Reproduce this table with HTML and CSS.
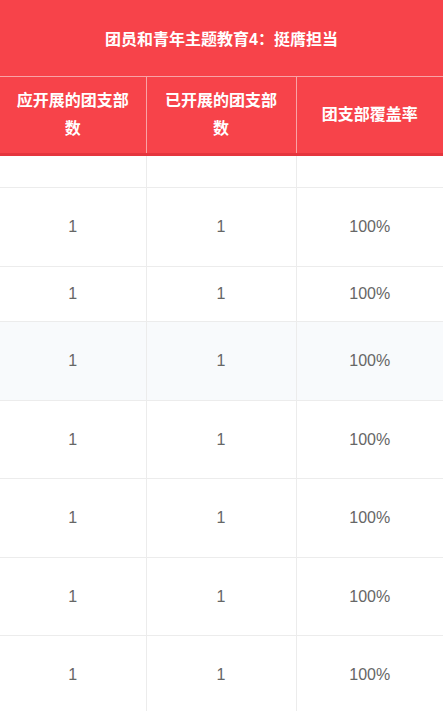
FILE: index.html
```html
<!DOCTYPE html>
<html lang="zh-CN">
<head>
    <meta charset="UTF-8">
    <meta name="viewport" content="width=device-width, initial-scale=1.0">
    <title>团支部覆盖率</title>
    <link rel="stylesheet" href="styles.css">
</head>
<body>
    <table class="stat-table">
        <colgroup>
            <col class="col-a">
            <col class="col-b">
            <col class="col-c">
        </colgroup>
        <thead>
            <tr class="title-row">
                <th colspan="3">团员和青年主题教育4：挺膺担当</th>
            </tr>
            <tr class="head-row">
                <th>应开展的团支部数</th>
                <th>已开展的团支部数</th>
                <th>团支部覆盖率</th>
            </tr>
        </thead>
        <tbody>
            <tr class="blank-row"><td></td><td></td><td></td></tr>
            <tr class="tall"><td>1</td><td>1</td><td>100%</td></tr>
            <tr class="short"><td>1</td><td>1</td><td>100%</td></tr>
            <tr class="tall shade"><td>1</td><td>1</td><td>100%</td></tr>
            <tr class="mid"><td>1</td><td>1</td><td>100%</td></tr>
            <tr class="tall"><td>1</td><td>1</td><td>100%</td></tr>
            <tr class="mid"><td>1</td><td>1</td><td>100%</td></tr>
            <tr class="tall"><td>1</td><td>1</td><td>100%</td></tr>
        </tbody>
    </table>
</body>
</html>
```

FILE: styles.css
```css
body{
    margin:0;
    background:#fff;
    font-family:"Liberation Sans","Noto Sans CJK SC",sans-serif;
}
.stat-table{
    width:443px;
    border-collapse:collapse;
    table-layout:fixed;
}
.col-a{
    width:146px;
}
.col-b{
    width:150px;
}
.col-c{
    width:147px;
}
.stat-table th{
    background-color:#f7434a;
    color:#fff;
    font-size:16px;
    font-weight:bold;
    padding:0 14px;
}
.title-row th{
    height:76px;
    border-bottom:1px solid #f9a3a6;
}
.head-row th{
    height:76px;
    line-height:28px;
    border-left:1px solid #f9a3a6;
    border-bottom:3px solid #e5353d;
}
.head-row th:first-child{
    border-left:none;
}
.stat-table td{
    text-align:center;
    color:#666;
    font-size:16px;
    padding:0;
    border-left:1px solid #ececec;
    border-bottom:1px solid #ececec;
}
.stat-table td:first-child{
    border-left:none;
}
.blank-row td{
    height:31px;
}
.tall td{
    height:78px;
}
.mid td{
    height:77px;
}
.short td{
    height:54px;
}
.shade td{
    background-color:#f8fafc;
}
```
